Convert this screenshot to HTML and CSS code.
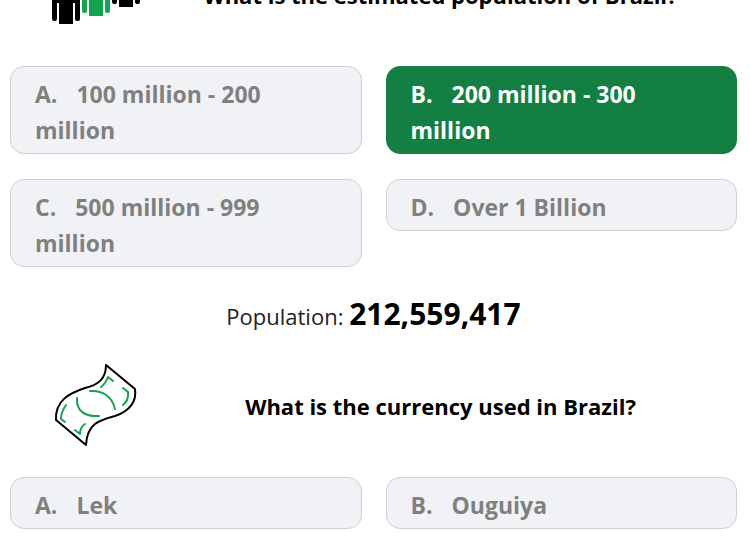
FILE: index.html
```html
<!DOCTYPE html>
<html lang="en">
<head>
<meta charset="utf-8">
<meta name="viewport" content="width=device-width, initial-scale=1">
<title>Brazil quiz</title>
<link rel="stylesheet" href="styles.css">
</head>
<body>
<main class="quiz">
  <section class="card">
    <header class="question">
      <svg class="icon" viewBox="0 0 96 96" aria-hidden="true">
        <defs>
          <g id="person">
            <circle cx="14" cy="6" r="6"/>
            <path d="M7 14h14q7 0 7 7v25q0 2-2 2h-1q-2 0-2-2V30h-2v21H7V30H5v16q0 2-2 2H2q-2 0-2-2V21q0-7 7-7z"/>
          </g>
        </defs>
        <use href="#person" x="4" y="27"/>
        <use href="#person" x="34" y="19" class="green"/>
        <use href="#person" x="64" y="10"/>
      </svg>
      <h2 class="title">What is the estimated population of Brazil?</h2>
    </header>
    <div class="options">
      <button class="option" type="button"><span class="letter">A.</span>100 million - 200 million</button>
      <button class="option correct" type="button"><span class="letter">B.</span>200 million - 300 million</button>
      <button class="option" type="button"><span class="letter">C.</span>500 million - 999 million</button>
      <button class="option" type="button"><span class="letter">D.</span>Over 1 Billion</button>
    </div>
    <p class="answer">Population: <strong class="figure">212,559,417</strong></p>
  </section>
  <section class="card">
    <header class="question">
      <svg class="icon" viewBox="0 0 96 96" aria-hidden="true">
        <path class="note" d="M58 8L87 32C89 44 82 54 67 59C52 63 39 66 38 88L8 63C7 43 22 36 37 31C50 28 58 22 58 8z"/>
        <path class="detail" d="M42 34C54 33 64 39 67 52M29 41C28 53 36 60 51 59M53 30Q58 26 60 20L65 24M75 31L80 35Q81 43 75 48M18 48Q13 55 13 62L17 65M27 73L32 77Q32 70 37 67"/>
      </svg>
      <h2 class="title">What is the currency used in Brazil?</h2>
    </header>
    <div class="options">
      <button class="option" type="button"><span class="letter">A.</span>Lek</button>
      <button class="option" type="button"><span class="letter">B.</span>Ouguiya</button>
    </div>
  </section>
</main>
</body>
</html>
```
FILE: styles.css
```css
* {
  box-sizing: border-box;
}

body {
  margin: 0;
  overflow: hidden;
  background: #fff;
  color: #000;
  font: 22px/36px "Open Sans", "Noto Sans", sans-serif;
}

/* The view is scrolled part way into the first question. */
.quiz {
  margin-top: -54px;
  padding: 0 13px 24px 10px;
}

.question {
  display: flex;
  align-items: center;
  padding-left: 38px;
  margin-bottom: 24px;
}

.icon {
  flex: none;
  width: 96px;
  height: 96px;
}

.green {
  fill: #14a34f;
}

.note,
.detail {
  fill: none;
  stroke: #000;
  stroke-width: 2;
  stroke-linejoin: round;
  stroke-linecap: round;
}

.detail {
  stroke: #14a34f;
}

.title {
  flex: 1;
  margin: 0;
  padding-top: 2px;
  text-align: center;
  font-size: 22px;
  font-weight: 700;
}

.options {
  display: grid;
  grid-template-columns: 1fr 1fr;
  align-items: start;
  gap: 25px 24px;
}

.option {
  padding: 9px 24px 5px;
  border: 1px solid #ced0d5;
  border-radius: 14px;
  background: #f0f2f5;
  color: #808080;
  font: inherit;
  font-size: 23px;
  font-weight: 700;
  text-align: left;
}

.correct {
  border-color: #137f43;
  background: #137f43;
  color: #fff;
}

.letter {
  margin-right: 19px;
}

.answer {
  margin: 31px 0 23px;
  text-align: center;
  color: #222;
}

.figure {
  color: #000;
  font-size: 30px;
  line-height: 30px;
}
```
